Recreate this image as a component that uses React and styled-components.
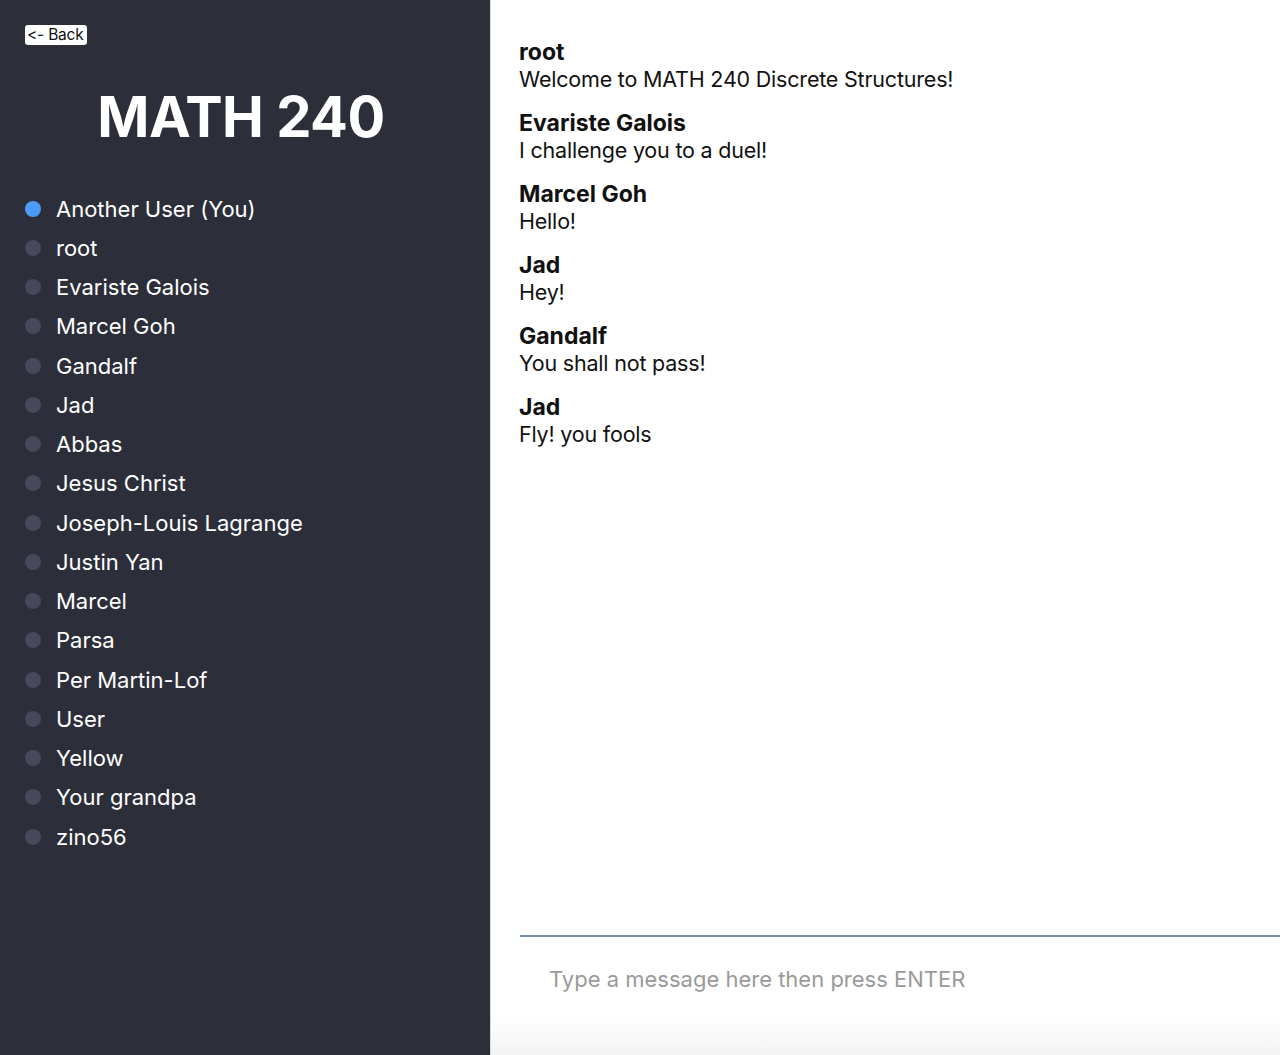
import React from 'react';
import styled, { createGlobalStyle } from 'styled-components';

const GlobalStyle = createGlobalStyle`
  html, body {
    margin: 0;
    padding: 0;
    height: 100%;
  }
  body {
    font-family: 'Inter', 'Liberation Sans', sans-serif;
    font-feature-settings: 'calt' 0;
  }
  #root {
    height: 100%;
  }
`

const Page = styled.div`
  display: flex;
  width: 1280px;
  height: 1055px;
  overflow: hidden;
`

const Sidebar = styled.div`
  width: 490px;
  flex-shrink: 0;
  background-color: #2c2f3a;
  padding: 25px 0 0 25px;
  box-sizing: border-box;
  display: flex;
  flex-direction: column;
`

const BackButton = styled.button`
  align-self: flex-start;
  background: #ffffff;
  color: #111;
  border: none;
  border-radius: 3px;
  padding: 1px 3px 1px 2px;
  font-family: 'Inter', sans-serif;
  font-feature-settings: 'calt' 0;
  font-size: 15.5px;
  line-height: 18px;
  letter-spacing: -0.2px;
  cursor: pointer;
`

const Title = styled.h1`
  margin: 38px 33px 0 0;
  text-align: center;
  color: #ffffff;
  font-size: 56px;
  font-weight: 700;
  line-height: 68px;
  letter-spacing: -0.5px;
`

const UserList = styled.ul`
  list-style: none;
  margin: 38px 0 0 0;
  padding: 0;
`

const UserItem = styled.li`
  display: flex;
  align-items: center;
  gap: 15px;
  height: 39.25px;
  color: #ffffff;
  font-size: 22px;
`

const Dot = styled.span`
  width: 16px;
  height: 16px;
  border-radius: 50%;
  background: ${p => (p.$active ? '#4a9cf7' : '#454959')};
  flex-shrink: 0;
`

const ChatPane = styled.div`
  flex: 1;
  display: flex;
  flex-direction: column;
  background: linear-gradient(to bottom, #ffffff 0%, #ffffff 96%, #f3f3f3 100%);
  border-left: 1px solid #d8d8dc;
`

const Messages = styled.div`
  flex: 1;
  padding: 39px 0 0 28px;
  display: flex;
  flex-direction: column;
  gap: 18px;
`

const Message = styled.div`
  color: #111;
  font-size: 21.5px;
  line-height: 26.5px;
  letter-spacing: -0.2px;
`

const Author = styled.div`
  font-weight: 700;
  font-size: 23px;
  letter-spacing: 0;
`

const Composer = styled.div`
  margin-left: 29px;
  border-top: 2px solid #7590a8;
  height: 120px;
  padding: 29px 0 0 29px;
  box-sizing: border-box;
`

const Input = styled.input`
  width: 100%;
  border: none;
  outline: none;
  background: transparent;
  font-family: 'Inter', sans-serif;
  font-size: 22px;
  color: #111;
  padding: 0;
  &::placeholder {
    color: #9a9a9a;
  }
`

const users = [
  'Another User (You)', 'root', 'Evariste Galois', 'Marcel Goh', 'Gandalf', 'Jad',
  'Abbas', 'Jesus Christ', 'Joseph-Louis Lagrange', 'Justin Yan', 'Marcel', 'Parsa',
  'Per Martin-Lof', 'User', 'Yellow', 'Your grandpa', 'zino56',
];

const messages = [
  ['root', 'Welcome to MATH 240 Discrete Structures!'],
  ['Evariste Galois', 'I challenge you to a duel!'],
  ['Marcel Goh', 'Hello!'],
  ['Jad', 'Hey!'],
  ['Gandalf', 'You shall not pass!'],
  ['Jad', 'Fly! you fools'],
];

function App() {
  return (
    <Page>
      <GlobalStyle />
      <Sidebar>
        <BackButton>&lt;- Back</BackButton>
        <Title>MATH 240</Title>
        <UserList>
          {users.map((u, i) => (
            <UserItem key={u}>
              <Dot $active={i === 0} />
              {u}
            </UserItem>
          ))}
        </UserList>
      </Sidebar>
      <ChatPane>
        <Messages>
          {messages.map(([author, text], i) => (
            <Message key={i}>
              <Author>{author}</Author>
              <div>{text}</div>
            </Message>
          ))}
        </Messages>
        <Composer>
          <Input placeholder="Type a message here then press ENTER" />
        </Composer>
      </ChatPane>
    </Page>
  );
}

export default App;
